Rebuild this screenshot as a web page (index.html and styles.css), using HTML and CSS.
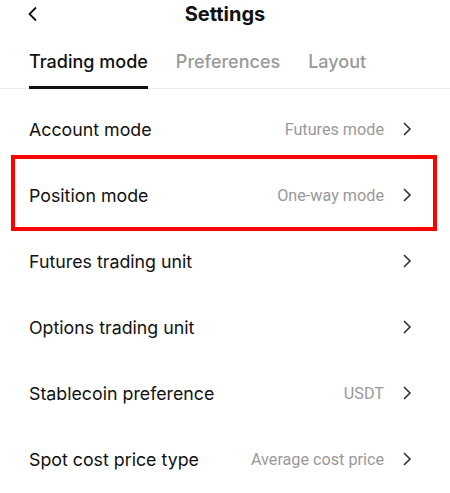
FILE: index.html
```html
<!DOCTYPE html>
<html lang="en">
<head>
  <meta charset="UTF-8" />
  <meta name="viewport" content="width=device-width, initial-scale=1.0" />
  <title>Settings</title>
  <link rel="stylesheet" href="styles.css">
</head>
<body>
  <div class="page">
    <div class="header">
      <svg class="back" width="12" height="16" viewBox="0 0 12 16"><path d="M9 1.5 L2.5 8 L9 14.5" fill="none" stroke="#111" stroke-width="1.8"/></svg>
      <h1>Settings</h1>
    </div>
    <div class="tabs">
      <div class="tab active">Trading mode</div>
      <div class="tab">Preferences</div>
      <div class="tab">Layout</div>
    </div>

    <div class="list">
      <div class="row">
        <span class="label">Account mode</span>
        <span class="value">Futures mode</span>
        <svg class="arrow" width="10" height="16" viewBox="0 0 10 16"><path d="M2 2 L8 8 L2 14" fill="none" stroke="#333" stroke-width="1.6"/></svg>
      </div>
      <div class="row">
        <span class="label">Position mode</span>
        <span class="value">One-way mode</span>
        <svg class="arrow" width="10" height="16" viewBox="0 0 10 16"><path d="M2 2 L8 8 L2 14" fill="none" stroke="#333" stroke-width="1.6"/></svg>
        <div class="highlight"></div>
      </div>
      <div class="row">
        <span class="label">Futures trading unit</span>
        <span class="value"></span>
        <svg class="arrow" width="10" height="16" viewBox="0 0 10 16"><path d="M2 2 L8 8 L2 14" fill="none" stroke="#333" stroke-width="1.6"/></svg>
      </div>
      <div class="row">
        <span class="label">Options trading unit</span>
        <span class="value"></span>
        <svg class="arrow" width="10" height="16" viewBox="0 0 10 16"><path d="M2 2 L8 8 L2 14" fill="none" stroke="#333" stroke-width="1.6"/></svg>
      </div>
      <div class="row">
        <span class="label">Stablecoin preference</span>
        <span class="value">USDT</span>
        <svg class="arrow" width="10" height="16" viewBox="0 0 10 16"><path d="M2 2 L8 8 L2 14" fill="none" stroke="#333" stroke-width="1.6"/></svg>
      </div>
      <div class="row">
        <span class="label">Spot cost price type</span>
        <span class="value">Average cost price</span>
        <svg class="arrow" width="10" height="16" viewBox="0 0 10 16"><path d="M2 2 L8 8 L2 14" fill="none" stroke="#333" stroke-width="1.6"/></svg>
      </div>
    </div>
  </div>
</body>
</html>
```

FILE: styles.css
```css
body {
  margin: 0;
  background: #fff;
  font-family: Inter, "Liberation Sans", sans-serif;
  color: #111;
}
.page {
  width: 450px;
  height: 493px;
  overflow: hidden;
}
.header {
  height: 28px;
  display: flex;
  align-items: center;
  justify-content: center;
  position: relative;
}
.back {
  position: absolute;
  left: 27px;
  top: 6px;
}
h1 {
  margin: 0;
  font-size: 20px;
  font-weight: 700;
  line-height: 28px;
}
.tabs {
  display: flex;
  gap: 28px;
  padding: 0 29px;
  margin-top: 20px;
  border-bottom: 1px solid #eee;
}
.tab {
  font-size: 18px;
  font-weight: 500;
  color: #999;
  line-height: 28px;
  padding-bottom: 10px;
  border-bottom: 3px solid transparent;
  margin-bottom: -1px;
}
.tab.active {
  color: #111;
  border-bottom-color: #111;
}
.list {
  padding-top: 7px;
}
.row {
  height: 66px;
  display: flex;
  align-items: center;
  padding: 0 38px 0 29px;
  position: relative;
}
.label {
  font-size: 17.8px;
  flex: 1;
}
.value {
  font-family: Roboto, sans-serif;
  font-size: 16.2px;
  color: #999;
  margin-right: 18px;
}
.highlight {
  position: absolute;
  left: 11px;
  right: 13px;
  top: -7px;
  bottom: -3px;
  border: 4px solid #f00;
}
```
